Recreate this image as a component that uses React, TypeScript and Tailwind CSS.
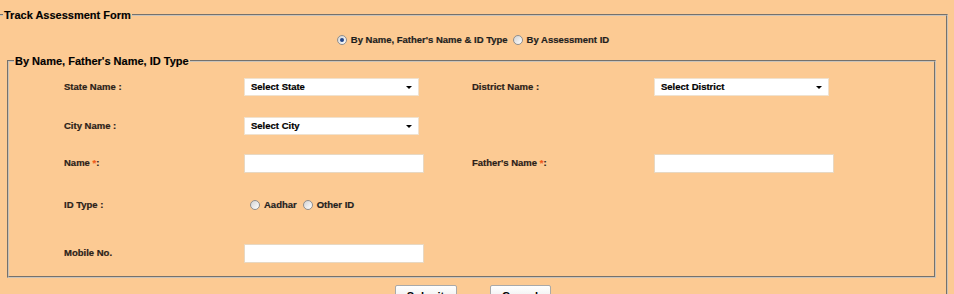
import React from "react";

const font = "font-['Liberation_Sans',Arial,sans-serif]";
const small = "text-[9.5px] font-bold leading-[12px] [-webkit-text-stroke:0.2px]";

const Radio = ({ checked }: { checked?: boolean }) => (
  <span className="inline-flex h-[10px] w-[10px] items-center justify-center rounded-full border border-[#8f8f8f] bg-gradient-to-br from-[#d2d2d2] to-white">
    {checked && <span className="h-[4px] w-[4px] rounded-full bg-[#23468a]" />}
  </span>
);

const Select = ({ label }: { label: string }) => (
  <div className={`flex h-[16px] w-[173px] items-center justify-between bg-white px-[6px] text-black shadow-[0_0_0_1px_#f0e2cf] ${small}`}>
    <span>{label}</span>
    <span className="h-0 w-0 border-x-[3px] border-t-[3px] border-x-transparent border-t-black" />
  </div>
);

const Input = () => <div className="h-[17px] w-[178px] bg-white shadow-[0_0_0_1px_#e8d8c2]" />;

const Label = ({ text, star }: { text: string; star?: boolean }) => (
  <span className={`text-[#2b2118] ${small}`}>
    {text}
    {star && (
      <>
        {" "}
        <span className="text-[#f05a1a]">*</span>:
      </>
    )}
  </span>
);

export default function App() {
  return (
    <div className={`h-[294px] w-[954px] overflow-hidden bg-[#fcca93] ${font}`}>
      <fieldset className="mr-[6px] mt-[8px] border-2 border-l-0 border-[#c9c3ba] pl-[3px] [border-style:groove]">
        <legend className="px-[1px] text-[11px] font-bold leading-[14px] text-black [-webkit-text-stroke:0.15px]">
          Track Assessment Form
        </legend>

        {/* search mode */}
        <div className={`flex h-[32px] items-center justify-center pr-[3px] pt-[4px] text-[#1e1e1e] ${small}`}>
          <label className="flex items-center gap-[4px]">
            <Radio checked />
            By Name, Father's Name &amp; ID Type
          </label>
          <label className="ml-[5px] flex items-center gap-[4px]">
            <Radio />
            By Assessment ID
          </label>
        </div>

        <fieldset className="ml-[4px] mr-[10px] border-2 border-[#c9c3ba] pl-[5px] [border-style:groove]">
          <legend className="px-[1px] text-[11px] font-bold leading-[14px] text-black [-webkit-text-stroke:0.15px]">
            By Name, Father's Name, ID Type
          </legend>

          <div className="flex h-[38px] items-center pl-[50px]">
            <div className="flex w-[181px]"><Label text="State Name :" /></div>
            <div className="flex w-[227px]"><Select label="Select State" /></div>
            <div className="flex w-[183px]"><Label text="District Name :" /></div>
            <Select label="Select District" />
          </div>

          <div className="flex h-[40px] items-center pl-[50px]">
            <div className="flex w-[181px]"><Label text="City Name :" /></div>
            <Select label="Select City" />
          </div>

          <div className="flex h-[34px] items-center pl-[50px]">
            <div className="flex w-[181px]"><Label text="Name" star /></div>
            <div className="flex w-[227px]"><Input /></div>
            <div className="flex w-[183px]"><Label text="Father's Name" star /></div>
            <Input />
          </div>

          <div className="flex h-[50px] items-center pl-[50px]">
            <div className="flex w-[186px]"><Label text="ID Type :" /></div>
            <div className={`flex items-center text-[#1e1e1e] ${small}`}>
              <label className="flex items-center gap-[4px]">
                <Radio />
                Aadhar
              </label>
              <label className="ml-[6px] flex items-center gap-[4px]">
                <Radio />
                Other ID
              </label>
            </div>
          </div>

          <div className="flex h-[46px] items-center pl-[50px]">
            <div className="flex w-[181px]"><Label text="Mobile No." /></div>
            <Input />
          </div>
        </fieldset>

        <div className="flex justify-center gap-[33px] pr-[4px] pt-[7px]">
          <button className="h-[22px] w-[62px] rounded-[2px] border border-[#a9a9a9] bg-gradient-to-b from-white to-[#e6e6e6] text-[11px] font-bold leading-[20px] text-black">
            Submit
          </button>
          <button className="h-[22px] w-[61px] rounded-[2px] border border-[#a9a9a9] bg-gradient-to-b from-white to-[#e6e6e6] text-[11px] font-bold leading-[20px] text-black">
            Cancel
          </button>
        </div>
        <div className="h-[20px]" />
      </fieldset>
    </div>
  );
}
